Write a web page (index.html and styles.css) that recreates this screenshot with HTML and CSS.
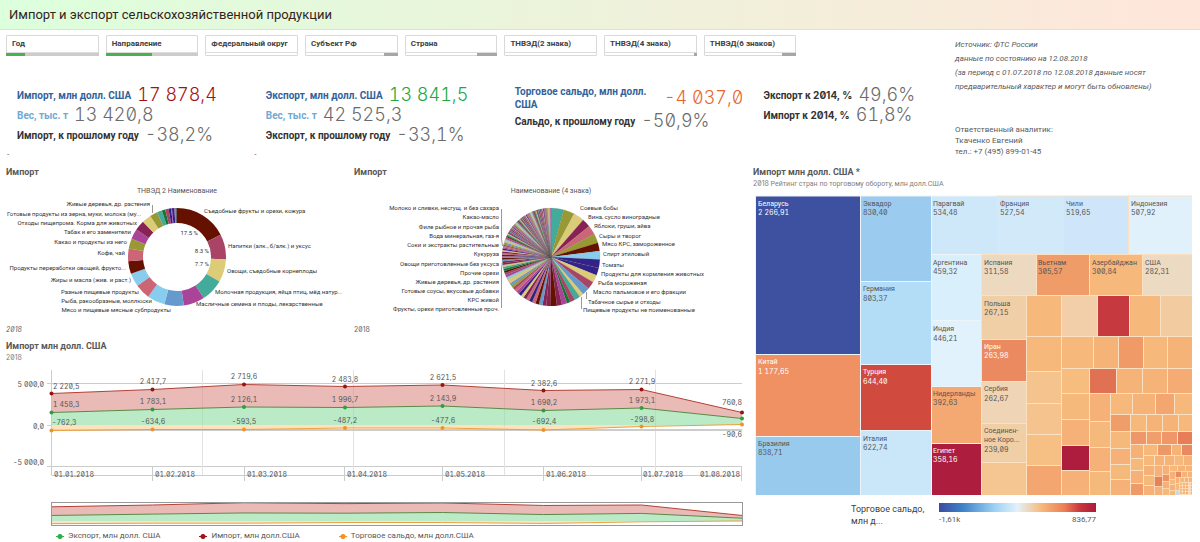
FILE: index.html
```html
<!DOCTYPE html>
<html lang="ru">
<head>
<meta charset="utf-8">
<title>Импорт и экспорт сельскохозяйственной продукции</title>
<link rel="stylesheet" href="styles.css">
</head>
<body>
<header class="title-bar"><h1>Импорт и экспорт сельскохозяйственной продукции</h1></header>
<section class="top">
  <div class="summary">
    <nav class="filters">
      <button class="filter selected fifth">Год</button>
      <button class="filter selected half">Направление</button>
      <button class="filter">Федеральный округ</button>
      <button class="filter tail">Субъект РФ</button>
      <button class="filter tail wide">Страна</button>
      <button class="filter">ТНВЭД(2 знака)</button>
      <button class="filter tail dot">ТНВЭД(4 знака)</button>
      <button class="filter tail">ТНВЭД(6 знаков)</button>
    </nav>
    <div class="kpis">
      <div class="kpi">
        <p><b class="blue">Импорт, млн долл. США</b><span class="value red">17 878,4</span></p>
        <p><b class="sky">Вес, тыс. т</b><span class="value">13 420,8</span></p>
        <p><b>Импорт, к прошлому году</b><span class="value">-38,2%</span></p>
      </div>
      <div class="kpi">
        <p><b class="blue">Экспорт, млн долл. США</b><span class="value green">13 841,5</span></p>
        <p><b class="sky">Вес, тыс. т</b><span class="value">42 525,3</span></p>
        <p><b>Экспорт, к прошлому году</b><span class="value">-33,1%</span></p>
      </div>
      <div class="kpi">
        <p class="tall"><b class="blue wrap">Торговое сальдо, млн долл. США</b><span class="value orange">-4 037,0</span></p>
        <p><b>Сальдо, к прошлому году</b><span class="value">-50,9%</span></p>
      </div>
      <div class="kpi">
        <p><b>Экспорт к <span class="zero">2014, %</span></b><span class="value">49,6%</span></p>
        <p><b>Импорт к <span class="zero">2014, %</span></b><span class="value">61,8%</span></p>
      </div>
    </div>
    <div class="marks"><span>-</span><span>-</span></div>
  </div>
  <aside class="notes">
    <p class="source">Источник: ФТС России<br>данные по состоянию на 12.08.2018<br>(за период с 01.07.2018 по 12.08.2018 данные носят<br>предварительный характер и могут быть обновлены)</p>
    <p class="contact">Ответственный аналитик:<br>Ткаченко Евгений<br>тел.: +7 (495) 899-01-45</p>
  </aside>
</section>
<main class="board">
  <div class="left">
    <div class="pies">
      <section>
        <h2>Импорт</h2>
        <svg class="chart" viewBox="0 180 348 140">
          <text class="caption mid" x="177" y="194">ТНВЭД 2 Наименование</text>
          <g id="donut"></g>
          <path class="lead" d="M152.500 206V214"/>
          <g class="tiny end">
            <text x="150" y="207">Живые деревья, др. растения</text>
            <text x="141" y="217">Готовые продукты из зерна, муки, молока (му...</text>
            <text x="137" y="226">Отходы пищепрома. Корма для животных</text>
            <text x="131" y="235">Табак и его заменители</text>
            <text x="127" y="245">Какао и продукты из него</text>
            <text x="125" y="256">Кофе, чай</text>
            <text x="126" y="271">Продукты переработки овощей, фрукто...</text>
            <text x="131" y="283">Жиры и масла (жив. и раст.)</text>
            <text x="139" y="295">Разные пищевые продукты</text>
            <text x="152" y="304">Рыба, ракообразные, моллюски</text>
            <text x="171" y="313">Мясо и пищевые мясные субпродукты</text>
          </g>
          <g class="tiny">
            <text x="204" y="214">Съедобные фрукты и орехи, кожура</text>
            <text x="228" y="249">Напитки (алк., б/алк.) и уксус</text>
            <text x="227" y="274">Овощи, съедобные корнеплоды</text>
            <text x="215" y="295">Молочная продукция, яйца птиц, мёд натур...</text>
            <text x="196" y="307">Масличные семена и плоды, лекарственные</text>
          </g>
          <g class="percent end"><text x="198" y="236">17.5 %</text><text x="209" y="254">8.3 %</text><text x="209" y="267">7.7 %</text></g>
        </svg>
        <p class="foot slanted">2018</p>
      </section>
      <section>
        <h2>Импорт</h2>
        <svg class="chart" viewBox="348 180 400 140">
          <text class="caption mid" x="551" y="194">Наименование (4 знака)</text>
          <g id="pie"></g>
          <path class="lead" d="M501.500 210V240L502.500 247M501.500 309V270L502.500 262M581.500 310V298M586.500 300V293"/>
          <g class="tiny end">
            <text x="499" y="211">Молоко и сливки, несгущ. и без сахара</text>
            <text x="499" y="220">Какао-масло</text>
            <text x="499" y="230">Филе рыбное и прочая рыба</text>
            <text x="499" y="239">Вода минеральная, газ-я</text>
            <text x="499" y="248">Соки и экстракты растительные</text>
            <text x="499" y="257">Кукуруза</text>
            <text x="499" y="267">Овощи приготовленные без уксуса</text>
            <text x="499" y="276">Прочие орехи</text>
            <text x="499" y="285">Живые деревья, др. растения</text>
            <text x="499" y="294">Готовые соусы, вкусовые добавки</text>
            <text x="499" y="303">КРС живой</text>
            <text x="499" y="312">Фрукты, орехи приготовленные проч.</text>
          </g>
          <g class="tiny">
            <text x="580" y="211">Соевые бобы</text>
            <text x="588" y="220">Вина, сусло виноградные</text>
            <text x="594" y="229">Яблоки, груши, айва</text>
            <text x="599" y="239">Сыры и творог</text>
            <text x="602" y="247">Мясо КРС, замороженное</text>
            <text x="603" y="257">Спирт этиловый</text>
            <text x="602" y="268">Томаты</text>
            <text x="601" y="277">Продукты для кормления животных</text>
            <text x="598" y="286">Рыба мороженая</text>
            <text x="593" y="295">Масло пальмовое и его фракции</text>
            <text x="588" y="305">Табачное сырье и отходы</text>
            <text x="583" y="313">Пищевые продукты не поименованные</text>
          </g>
        </svg>
        <p class="foot">2018</p>
      </section>
    </div>
    <section class="trend">
      <h2>Импорт млн долл. США</h2>
      <p class="sub zero">2018</p>
      <svg class="chart" viewBox="0 366 748 162">
        <path class="grid" d="M47 383.500H742M47 425.500H52M47 466.500H742M51.500 475.500H742M51.500 370V475M152.500 466V481M244.500 466V481M344.500 466V481M442.500 466V481M543.500 466V481M641.500 466V481M741.500 466V481"/>
        <path class="grid faint" d="M202.500 370V475M353.500 370V475M504.500 370V475M655.500 370V475"/>
        <path class="grid band" d="M52 430H742"/>
        <g id="trend"></g>
        <g class="num end"><text x="44" y="387">5 000,0</text><text x="44" y="429">0,0</text><text x="44" y="465">-5 000,0</text></g>
        <g class="num"><text x="53" y="389">2 220,5</text><text x="53" y="407">1 458,3</text><text x="52" y="425">-762,3</text></g>
        <g class="num mid">
          <text x="153" y="384">2 417,7</text><text x="244" y="379">2 719,6</text><text x="345" y="382">2 483,8</text><text x="443" y="380">2 621,5</text><text x="544" y="386">2 382,6</text><text x="642" y="384">2 271,9</text>
          <text x="153" y="404">1 783,1</text><text x="244" y="402">2 126,1</text><text x="345" y="402">1 996,7</text><text x="443" y="401">2 143,9</text><text x="544" y="405">1 690,2</text><text x="642" y="403">1 973,1</text>
          <text x="153" y="424">-634,6</text><text x="244" y="424">-593,5</text><text x="345" y="423">-487,2</text><text x="443" y="423">-477,6</text><text x="544" y="424">-692,4</text><text x="642" y="422">-298,8</text>
        </g>
        <g class="num end"><text x="742" y="405">760,8</text><text x="742" y="437">-90,6</text></g>
        <g class="num">
          <text x="54" y="477">01.01.2018</text><text x="155" y="477">01.02.2018</text><text x="247" y="477">01.03.2018</text><text x="347" y="477">01.04.2018</text><text x="445" y="477">01.05.2018</text><text x="546" y="477">01.06.2018</text><text x="643" y="477">01.07.2018</text><text x="700" y="477">01.08.2018</text>
        </g>
        <g id="overview"></g>
        <rect class="frame" x="51.500" y="502.500" width="691" height="23"/>
      </svg>
      <ul class="legend"><li class="lg">Экспорт, млн долл. США</li><li class="lr">Импорт, млн долл.США</li><li class="lo">Торговое сальдо, млн долл.США</li></ul>
    </section>
  </div>
  <section class="right">
    <h2>Импорт млн долл. США *</h2>
    <p class="sub"><span class="zero">2018</span> Рейтинг стран по торговому обороту, млн долл.США</p>
    <svg class="chart map" viewBox="755 196 437 300">
      <g id="tiles"></g>
      <g class="country light">
        <text x="758" y="207">Беларусь</text><text class="n" x="758" y="216">2 266,91</text>
        <text x="758" y="365">Китай</text><text class="n" x="758" y="375">1 177,65</text>
        <text x="863" y="375">Турция</text><text class="n" x="863" y="385">644,40</text>
        <text x="933" y="454">Египет</text><text class="n" x="933" y="463">358,16</text>
        <text x="984" y="350">Иран</text><text class="n" x="984" y="359">263,98</text>
      </g>
      <g class="country">
        <text x="758" y="447">Бразилия</text><text class="n" x="758" y="456">838,71</text>
        <text x="863" y="207">Эквадор</text><text class="n" x="863" y="216">830,40</text>
        <text x="863" y="292">Германия</text><text class="n" x="863" y="302">803,37</text>
        <text x="863" y="442">Италия</text><text class="n" x="863" y="451">622,74</text>
        <text x="933" y="207">Парагвай</text><text class="n" x="933" y="216">534,48</text>
        <text x="1000" y="207">Франция</text><text class="n" x="1000" y="216">527,54</text>
        <text x="1066" y="207">Чили</text><text class="n" x="1066" y="216">519,65</text>
        <text x="1131" y="207">Индонезия</text><text class="n" x="1131" y="216">507,92</text>
        <text x="933" y="266">Аргентина</text><text class="n" x="933" y="275">459,32</text>
        <text x="933" y="332">Индия</text><text class="n" x="933" y="342">446,21</text>
        <text x="933" y="397">Нидерланды</text><text class="n" x="933" y="406">392,63</text>
        <text x="984" y="266">Испания</text><text class="n" x="984" y="275">311,58</text>
        <text x="1038" y="266">Вьетнам</text><text class="n" x="1038" y="275">305,57</text>
        <text x="1092" y="266">Азербайджан</text><text class="n" x="1092" y="275">300,84</text>
        <text x="1145" y="266">США</text><text class="n" x="1145" y="275">282,31</text>
        <text x="984" y="307">Польша</text><text class="n" x="984" y="316">267,15</text>
        <text x="984" y="392">Сербия</text><text class="n" x="984" y="402">262,67</text>
        <text x="984" y="434">Соединен-</text><text x="984" y="443">ное Коро...</text><text class="n" x="984" y="453">239,09</text>
      </g>
    </svg>
    <div class="scale">
      <span class="scale-label">Торговое сальдо, млн д...</span>
      <div class="scale-body"><div class="ramp"></div><div class="ends"><span>-1,61k</span><span>836,77</span></div></div>
    </div>
  </section>
</main>
<script src="charts.js"></script>
</body>
</html>
```
FILE: styles.css
```css
* { box-sizing: border-box; }
body { margin: 0; background: #fff; color: #595959; font-family: Roboto, "Open Sans", sans-serif; font-size: 9px; overflow-x: hidden; }
h1, h2, p, ul { margin: 0; padding: 0; }
.title-bar { display: flex; align-items: center; height: 30px; padding: 0 9px; border-bottom: 1px solid #dfe3cd; background: linear-gradient(90deg, #dcffdc, #ffe6da); }
h1 { font-size: 13px; line-height: 20px; font-weight: 400; color: #33231a; }
.top { display: grid; grid-template-columns: minmax(0, 955fr) minmax(0, 245fr); height: 135px; }
.filters { display: grid; grid-template-columns: repeat(8, minmax(0, 1fr)); gap: 7px; padding: 5px 0 0 6px; width: 83.4%; }
.filter { position: relative; height: 21px; padding: 0 0 3px 5px; border: 1px solid #d9d9d9; border-radius: 1px; background: linear-gradient(#fff 0 16px, #ddd 16px 17px, #fff 17px); color: #404040; font: bold 8px/14px Roboto, sans-serif; text-align: left; white-space: nowrap; }
.filter::after { content: ""; position: absolute; bottom: -1px; right: -1px; height: 3px; }
.selected::after { left: -1px; }
.fifth::after { background: linear-gradient(90deg, #4caf50 20%, #ccc 20%); }
.half::after { background: linear-gradient(90deg, #4caf50 50%, #ccc 50%); }
.tail::after { width: 14px; background: #a6a6a6; }
.wide::after { width: 20px; }
.dot::after { width: 3px; }
.kpis { display: grid; grid-template-columns: repeat(4, minmax(0, 1fr)); width: 106%; padding: 29px 0 0 17px; }
.kpi p { display: flex; align-items: center; gap: 6px; height: 20px; white-space: nowrap; }
.kpi .tall { height: 26px; justify-content: space-between; padding-right: 20px; }
.kpi b { font-size: 10px; line-height: 13px; color: #333; }
.kpi .wrap { white-space: normal; width: 138px; }
.kpi .blue { color: #32629b; }
.kpi .sky { color: #6fa9d3; }
.kpi .value { font: 300 18px/20px Inter, sans-serif; font-feature-settings: "zero", "tnum"; color: #6b6b6b; }
.kpi .red { color: #a01414; }
.kpi .green { color: #22a640; }
.kpi .orange { color: #e8662d; }
.zero { font-family: Inter, sans-serif; font-feature-settings: "zero"; }
.marks { display: grid; grid-template-columns: 249fr 706fr; padding-left: 7px; line-height: 8px; font-size: 8px; padding-top: 6px; }
.notes { font-size: 8px; }
.source { padding-top: 8px; font-style: italic; line-height: 14px; white-space: nowrap; }
.contact { padding-top: 30px; line-height: 11px; }
.board { display: grid; grid-template-columns: minmax(0, 748fr) minmax(0, 452fr); }
.pies { display: grid; grid-template-columns: minmax(0, 348fr) minmax(0, 400fr); }
h2 { padding-left: 6px; font-size: 9px; line-height: 14px; color: #595959; }
.sub { padding-left: 6px; font-size: 7px; line-height: 10px; color: #808080; }
.chart { display: block; width: 100%; height: auto; fill: #555; }
.caption { font-size: 7px; fill: #555; }
.mid { text-anchor: middle; }
.end { text-anchor: end; }
.tiny { font-size: 6px; fill: #333; }
.percent { font-size: 6px; fill: #333; }
.lead { fill: none; stroke: #999; stroke-width: 1; }
.foot { padding: 1px 0 0 6px; font: 7px/19px Inter, sans-serif; font-feature-settings: "zero"; color: #666; }
.slanted { font-style: italic; }
.trend .chart { margin-top: 3px; }
.grid { fill: none; stroke: #ccc; }
.faint { stroke: #e2e2e2; }
.band { stroke-width: 2; }
.num { font: 7px Inter, sans-serif; font-feature-settings: "zero", "tnum"; }
.frame { fill: none; stroke: #999; }
.legend { display: flex; gap: 39px; padding: 2px 0 0 56px; list-style: none; font-size: 8px; line-height: 12px; }
.legend li { display: flex; align-items: center; gap: 4px; }
.legend li::before { content: ""; width: 8px; height: 5px; background: radial-gradient(circle at center, currentColor 2px, transparent 3px), linear-gradient(transparent 2px, currentColor 2px 3px, transparent 3px); color: #2fae4a; }
.legend .lr::before { color: #a01414; }
.legend .lo::before { color: #f29222; }
.right h2, .right .sub { padding-left: 5px; }
.right .map { width: auto; margin: 6px 8px 0 7px; }
.country { font-size: 7px; fill: #555; }
.country .n { font: 7px Inter, sans-serif; font-feature-settings: "zero", "tnum"; }
.light { fill: #fff; }
.scale { display: flex; gap: 14px; padding: 8px 104px 0 103px; }
.scale-label { width: 74px; font-size: 9px; line-height: 12px; color: #404040; }
.scale-body { flex: 1; }
.ramp { height: 9px; background: linear-gradient(90deg, #3a4ba0, #3d82c8 15%, #9bd0f3 35%, #e3f1fa 50%, #f7ba7c 65%, #ec7d55 80%, #c8373c 90%, #ac1b3c); }
.ends { display: flex; justify-content: space-between; padding-top: 3px; font-size: 8px; line-height: 10px; }
```
FILE: charts.js
```javascript
const NS = "http://www.w3.org/2000/svg";
function draw(parent, tag, attrs) {
  const el = document.createElementNS(NS, tag);
  for (const key in attrs) el.setAttribute(key, attrs[key]);
  parent.appendChild(el);
}
function sector(parent, cx, cy, outer, inner, a, b, fill, stroke) {
  const at = (r, deg) => {
    const t = deg * Math.PI / 180;
    return (cx + r * Math.sin(t)).toFixed(2) + " " + (cy - r * Math.cos(t)).toFixed(2);
  };
  draw(parent, "path", { d: `M${at(outer, a)}A${outer} ${outer} 0 0 1 ${at(outer, b)}L${at(inner, b)}A${inner} ${inner} 0 0 0 ${at(inner, a)}Z`, fill, stroke: stroke || "none", "stroke-width": 0.12 });
}
function ring(id, cx, cy, outer, inner, list, stroke) {
  const parent = document.getElementById(id);
  let from = 0;
  for (const [to, color] of list) {
    sector(parent, cx, cy, outer, inner, from, to, color, stroke);
    from = to;
  }
}
ring("donut", 177, 258, 49, 34, [
  [63, "#661100"], [93, "#aa4466"], [120, "#ddcc77"], [147, "#44aa99"], [172, "#aa4499"], [195, "#6699cc"],
  [216, "#88ccee"], [234, "#cc6677"], [250, "#88ccee"], [265, "#661100"], [280, "#cc6677"], [292, "#999933"],
  [304, "#aa4499"], [316, "#882255"], [327, "#ddcc77"], [336, "#999933"], [342, "#44aa99"], [346, "#117733"],
  [350, "#aa4466"], [353, "#332288"], [354, "#aa4499"], [357, "#332288"], [358, "#88668f"], [360, "#666666"]]);

const slices = [
  [15, "#44aa99"], [28, "#999933"], [41, "#ddcc77"], [51, "#882255"], [62, "#cc6677"], [73, "#999933"], [83, "#661100"],
  [93, "#88ccee"], [103, "#332288"], [112, "#332288"], [121, "#ddcc77"], [130, "#aa4466"], [139, "#6699cc"], [144, "#ddcc77"],
  [151, "#44aa99"], [157, "#aa4466"], [161, "#117733"], [167, "#aa4499"], [173, "#882255"], [181, "#661100"]];
const palette = ["#882255", "#6699cc", "#117733", "#cc6677", "#aa4499", "#882255", "#ddcc77", "#44aa99", "#332288", "#aa4466", "#6699cc", "#332288", "#ddcc77", "#cc6677", "#999933", "#661100", "#aa4499", "#88ccee"];
let angle = 181, step = 4.6, n = 0;
while (angle < 359) {
  angle = Math.min(360, angle + step);
  slices.push([angle, palette[(n * 5 + (n >> 2)) % palette.length]]);
  step = Math.max(0.9, step * 0.97);
  n++;
}
ring("pie", 551, 258, 49, 0, slices, "#666666");

const xs = [51.5, 152.5, 244, 345, 442.5, 543.5, 641.5, 742];
const imports = [393.5, 389.5, 384.5, 386.5, 385, 390.5, 389.5, 412.5];
const exports_ = [412.5, 409.5, 407, 407.5, 406, 410.5, 408, 418.5];
const balance = [430.5, 429.5, 429.5, 428, 428, 430, 426.5, 424.5];
function plot(id, map, dots) {
  const parent = document.getElementById(id);
  const line = ys => ys.map((y, i) => xs[i] + " " + map(y)).join("L");
  const back = ys => xs.map((x, i) => x + " " + map(ys[i])).reverse().join("L");
  const zero = xs.map(() => 425);
  draw(parent, "path", { d: "M" + line(imports) + "L" + back(exports_) + "Z", fill: "#dc8f89", "fill-opacity": 0.62 });
  draw(parent, "path", { d: "M" + line(exports_) + "L" + back(zero) + "Z", fill: "#8fdea3", "fill-opacity": 0.62 });
  draw(parent, "path", { d: "M" + line(zero) + "L" + back(balance) + "Z", fill: "#ffd59e", "fill-opacity": 0.7 });
  for (const [ys, stroke, dot] of [[imports, "#b34238", "#97150f"], [exports_, "#5d8847", "#2f9e3c"], [balance, "#eba142", "#f29222"]]) {
    draw(parent, "path", { d: "M" + line(ys), fill: "none", stroke });
    if (dots) ys.forEach((y, i) => draw(parent, "circle", { cx: xs[i], cy: y, r: 2, fill: dot }));
  }
}
plot("trend", y => y, true);
plot("overview", y => 502.5 + (y - 384) * 0.455, false);

/* Treemap tiles: left, top, right, bottom, fill */
const o = "#f6b87b";
const boxes = [
  [755, 196.5, 860, 355, "#3d51a0"], [755, 355, 860, 437, "#ef9163"], [755, 437, 860, 496, "#98caee"],
  [860, 196.5, 931, 282, "#9bcbef"], [860, 282, 931, 365, "#b3dcf7"], [860, 365, 931, 431, "#d04a3e"], [860, 431, 931, 496, "#cae7fa"],
  [931, 196.5, 997, 255, "#cfe8f9"], [997, 196.5, 1063, 255, "#d2e9fa"], [1063, 196.5, 1128, 255, "#cfe6fa"], [1128, 196.5, 1192, 255, "#e0f1fc"],
  [931, 255, 981, 321, "#d9effc"], [931, 321, 981, 387, "#e1f2fd"], [931, 387, 981, 444, "#f4a972"], [931, 444, 981, 496, "#ad1e3e"],
  [981, 255, 1036, 296, "#edd9c0"], [1036, 255, 1089, 296, "#f09c69"], [1089, 255, 1142, 296, o], [1142, 255, 1192, 296, "#ecdac2"],
  [981, 296, 1026, 340, "#f1cfa6"], [981, 340, 1026, 382, "#eb8960"], [981, 382, 1026, 424, "#efd5b5"], [981, 424, 1026, 463, "#f1cfa6"], [981, 463, 1026, 496, "#f5c592"],
  [1026, 296, 1061, 337, o], [1061, 296, 1097, 337, "#f2cfa8"], [1097, 296, 1129, 337, "#c5393f"], [1129, 296, 1160, 337, o], [1160, 296, 1192, 337, "#f3cba0"]];
/* Splits a strip at the given stops; tints overrides the fill of single tiles. */
function row(top, bottom, stops, tints = {}) {
  for (let i = 0; i < stops.length - 1; i++) boxes.push([stops[i], top, stops[i + 1], bottom, tints[i] || (i % 3 ? "#f6b378" : o)]);
}
function column(left, right, stops, tints = {}) {
  for (let i = 0; i < stops.length - 1; i++) boxes.push([left, stops[i], right, stops[i + 1], tints[i] || (i % 2 ? "#f6b97c" : "#f5b177")]);
}
column(1026, 1061, [337, 372, 404, 435, 466, 496], { 0: o, 1: "#f5c48e", 2: "#f5c48e", 3: "#f6bf84", 4: "#f3a66f" });
row(337, 369, [1061, 1093, 1118, 1143, 1167, 1192], { 2: "#f09a68" });
column(1061, 1089, [369, 394, 420, 446, 471, 496], { 0: "#f7bd7f", 3: "#ae1c3e" });
row(369, 394, [1089, 1116, 1142, 1167, 1192], { 0: "#e17153", 3: "#f4ac74" });
column(1089, 1110, [394, 422, 448, 472, 496]);
row(394, 415, [1110, 1132, 1155, 1174, 1192], { 2: "#f4a670" });
column(1110, 1130, [415, 432, 449, 465, 480, 496], { 0: "#ef9e6a" });
row(415, 432, [1130, 1146, 1162, 1178, 1192]);
row(432, 445, [1130, 1146, 1161, 1177, 1192], { 0: "#ee9869", 1: "#f09e6b", 2: "#ef9768", 3: "#e87d59" });
column(1130, 1143, [445, 459, 471, 484, 496], { 3: "#ef9b69" });
row(445, 456, [1143, 1157, 1171, 1181, 1192], { 1: "#ee9767", 3: "#e98961" });
row(456, 466, [1143, 1154, 1164, 1174, 1183, 1192]);
column(1143, 1154, [466, 476, 486, 496]);
column(1154, 1162, [466, 477, 487, 496], { 1: "#e78258" });
column(1162, 1169, [466, 475, 482, 489, 496], { 1: "#ed9365" });
row(466, 472, [1169, 1177, 1185, 1192]);
column(1169, 1175, [472, 480, 485, 491, 496]);
row(472, 478, [1175, 1181, 1187, 1192], { 0: "#e98961" });
column(1175, 1179, [478, 484, 491, 496], { 2: "#c9d9e6" });
row(478, 483, [1179, 1184, 1188, 1192]);
for (let y = 483; y < 495; y += 3) row(y, Math.min(y + 3, 496), [1179, 1182, 1185, 1188, 1190, 1192], { 3: "#f5d5b4" });
const tiles = document.getElementById("tiles");
for (const [l, t, r, b, fill] of boxes) {
  const small = r - l < 10;
  draw(tiles, "rect", { x: l + 0.5, y: t + 0.5, width: r - l, height: b - t, fill, stroke: l > 980 ? "#fbe1c2" : "#eef5fa", "stroke-width": small ? 0.5 : 1 });
}
```
